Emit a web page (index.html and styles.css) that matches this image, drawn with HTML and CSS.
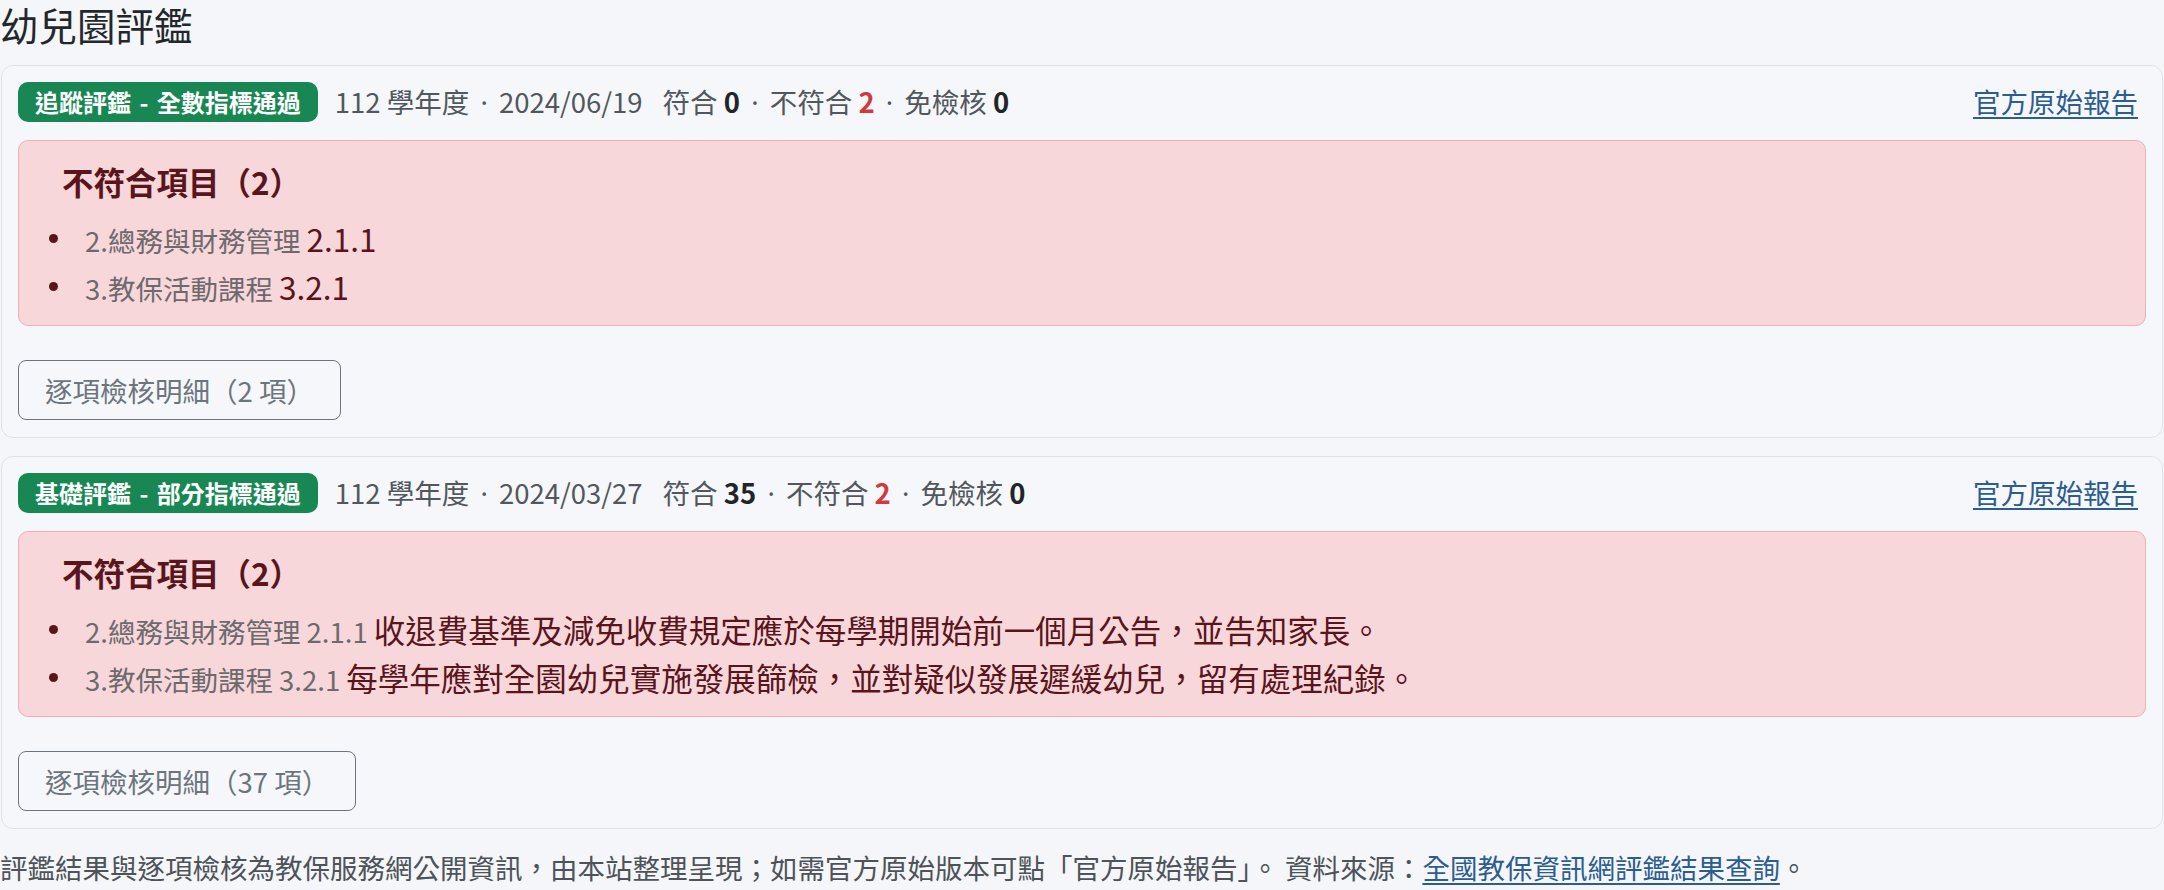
FILE: index.html
```html
<!DOCTYPE html>
<html lang="zh-TW">
<head>
<meta charset="utf-8">
<title>幼兒園評鑑</title>
<link rel="stylesheet" href="styles.css">
</head>
<body>
<main class="page">
  <h1 class="page-title">幼兒園評鑑</h1>

  <section class="card">
    <div class="card-head">
      <span class="badge">追蹤評鑑 - 全數指標通過</span>
      <span class="meta">112 學年度 <span class="sep">·</span> 2024/06/19</span>
      <span class="counts">符合 <b>0</b> <span class="sep">·</span> 不符合 <b class="bad">2</b> <span class="sep">·</span> 免檢核 <b>0</b></span>
      <a class="report-link" href="#">官方原始報告</a>
    </div>
    <div class="alert">
      <h2 class="alert-title">不符合項目（2）</h2>
      <ul class="fail-list">
        <li><span class="dot"></span><span class="item"><span class="muted">2.總務與財務管理</span> <span class="code">2.1.1</span></span></li>
        <li><span class="dot"></span><span class="item"><span class="muted">3.教保活動課程</span> <span class="code">3.2.1</span></span></li>
      </ul>
    </div>
    <button class="detail-btn" type="button">逐項檢核明細（2 項）</button>
  </section>

  <section class="card">
    <div class="card-head">
      <span class="badge">基礎評鑑 - 部分指標通過</span>
      <span class="meta">112 學年度 <span class="sep">·</span> 2024/03/27</span>
      <span class="counts">符合 <b>35</b> <span class="sep">·</span> 不符合 <b class="bad">2</b> <span class="sep">·</span> 免檢核 <b>0</b></span>
      <a class="report-link" href="#">官方原始報告</a>
    </div>
    <div class="alert">
      <h2 class="alert-title">不符合項目（2）</h2>
      <ul class="fail-list">
        <li><span class="dot"></span><span class="item"><span class="muted">2.總務與財務管理 2.1.1</span> <span class="desc">收退費基準及減免收費規定應於每學期開始前一個月公告，並告知家長。</span></span></li>
        <li><span class="dot"></span><span class="item"><span class="muted">3.教保活動課程 3.2.1</span> <span class="desc">每學年應對全園幼兒實施發展篩檢，並對疑似發展遲緩幼兒，留有處理紀錄。</span></span></li>
      </ul>
    </div>
    <button class="detail-btn" type="button">逐項檢核明細（37 項）</button>
  </section>

  <p class="footnote">評鑑結果與逐項檢核為教保服務網公開資訊，由本站整理呈現；如需官方原始版本可點「官方原始報告」。 資料來源：<a class="src-link" href="#">全國教保資訊網評鑑結果查詢</a>。</p>
</main>
</body>
</html>
```
FILE: styles.css
```css
* { box-sizing: border-box; }

html, body {
  margin: 0;
  padding: 0;
  background: #f4f6f9;
}

body {
  font-family: "Noto Sans CJK TC", "Noto Sans TC", "Noto Sans", sans-serif;
  font-size: 27.5px;
  line-height: 1.5;
  color: #212529;
}

.page {
  display: flex;
  flex-direction: column;
  padding-top: 2px;
}

.page-title {
  margin: 0;
  font-size: 38.5px;
  font-weight: 400;
  line-height: 44px;
  color: #23272b;
}

.card {
  margin: 19px 1px 0;
  padding: 16px 16px 17px;
  border: 1px solid #dfe3e8;
  border-radius: 12px;
  background: #f5f7fa;
  display: flex;
  flex-direction: column;
  align-items: flex-start;
}

.card + .card { margin-top: 18px; }

.card-head {
  align-self: stretch;
  display: flex;
  align-items: center;
  gap: 17px;
  height: 40px;
}

.badge {
  display: inline-block;
  background: #198754;
  color: #fff;
  font-size: 24px;
  font-weight: 700;
  line-height: 1;
  padding: 8px 17px;
  border-radius: 10px;
  white-space: nowrap;
  word-spacing: 3px;
}

.meta {
  color: #52575d;
  white-space: nowrap;
}

.counts {
  margin-left: 3px;
  color: #52575d;
  white-space: nowrap;
}

.sep {
  font-family: "Noto Sans", "Liberation Sans", sans-serif;
  padding: 0 5px;
}

.counts b {
  color: #212529;
  font-weight: 700;
}

.counts b.bad { color: #cf3a3f; }

.report-link {
  margin-left: auto;
  margin-right: 8px;
  color: #2c5d8f;
  text-decoration: underline;
  text-underline-offset: 4px;
  white-space: nowrap;
}

.alert {
  align-self: stretch;
  margin-top: 18px;
  padding: 22px 22px 14px;
  border: 1px solid #f1aeb5;
  border-radius: 10px;
  background: #f8d7da;
  color: #58151c;
}

.alert-title {
  margin: 0 0 14px;
  padding-left: 21px;
  font-size: 31.5px;
  font-weight: 700;
  line-height: 1.2;
}

.fail-list {
  list-style: none;
  margin: 0;
  padding: 0;
}

.fail-list li {
  display: flex;
  align-items: center;
  height: 48px;
  line-height: 48px;
}

.dot {
  flex: none;
  width: 9px;
  height: 9px;
  margin-left: 8px;
  margin-right: 27px;
  border-radius: 50%;
  background: #58151c;
}

.item { white-space: nowrap; }

.muted { color: #6c6a6d; }

.code, .desc {
  font-size: 31.5px;
  color: #58151c;
}

.detail-btn {
  margin-top: 34px;
  padding: 8px 26px;
  font-family: inherit;
  font-size: 27.5px;
  line-height: 42px;
  color: #6c757d;
  background: transparent;
  border: 1px solid #6c757d;
  border-radius: 8px;
}

.footnote {
  margin: 18px 0 0;
  color: #4d5358;
  white-space: nowrap;
}

.src-link {
  color: #2c5d8f;
  text-decoration: underline;
  text-underline-offset: 4px;
}
```
